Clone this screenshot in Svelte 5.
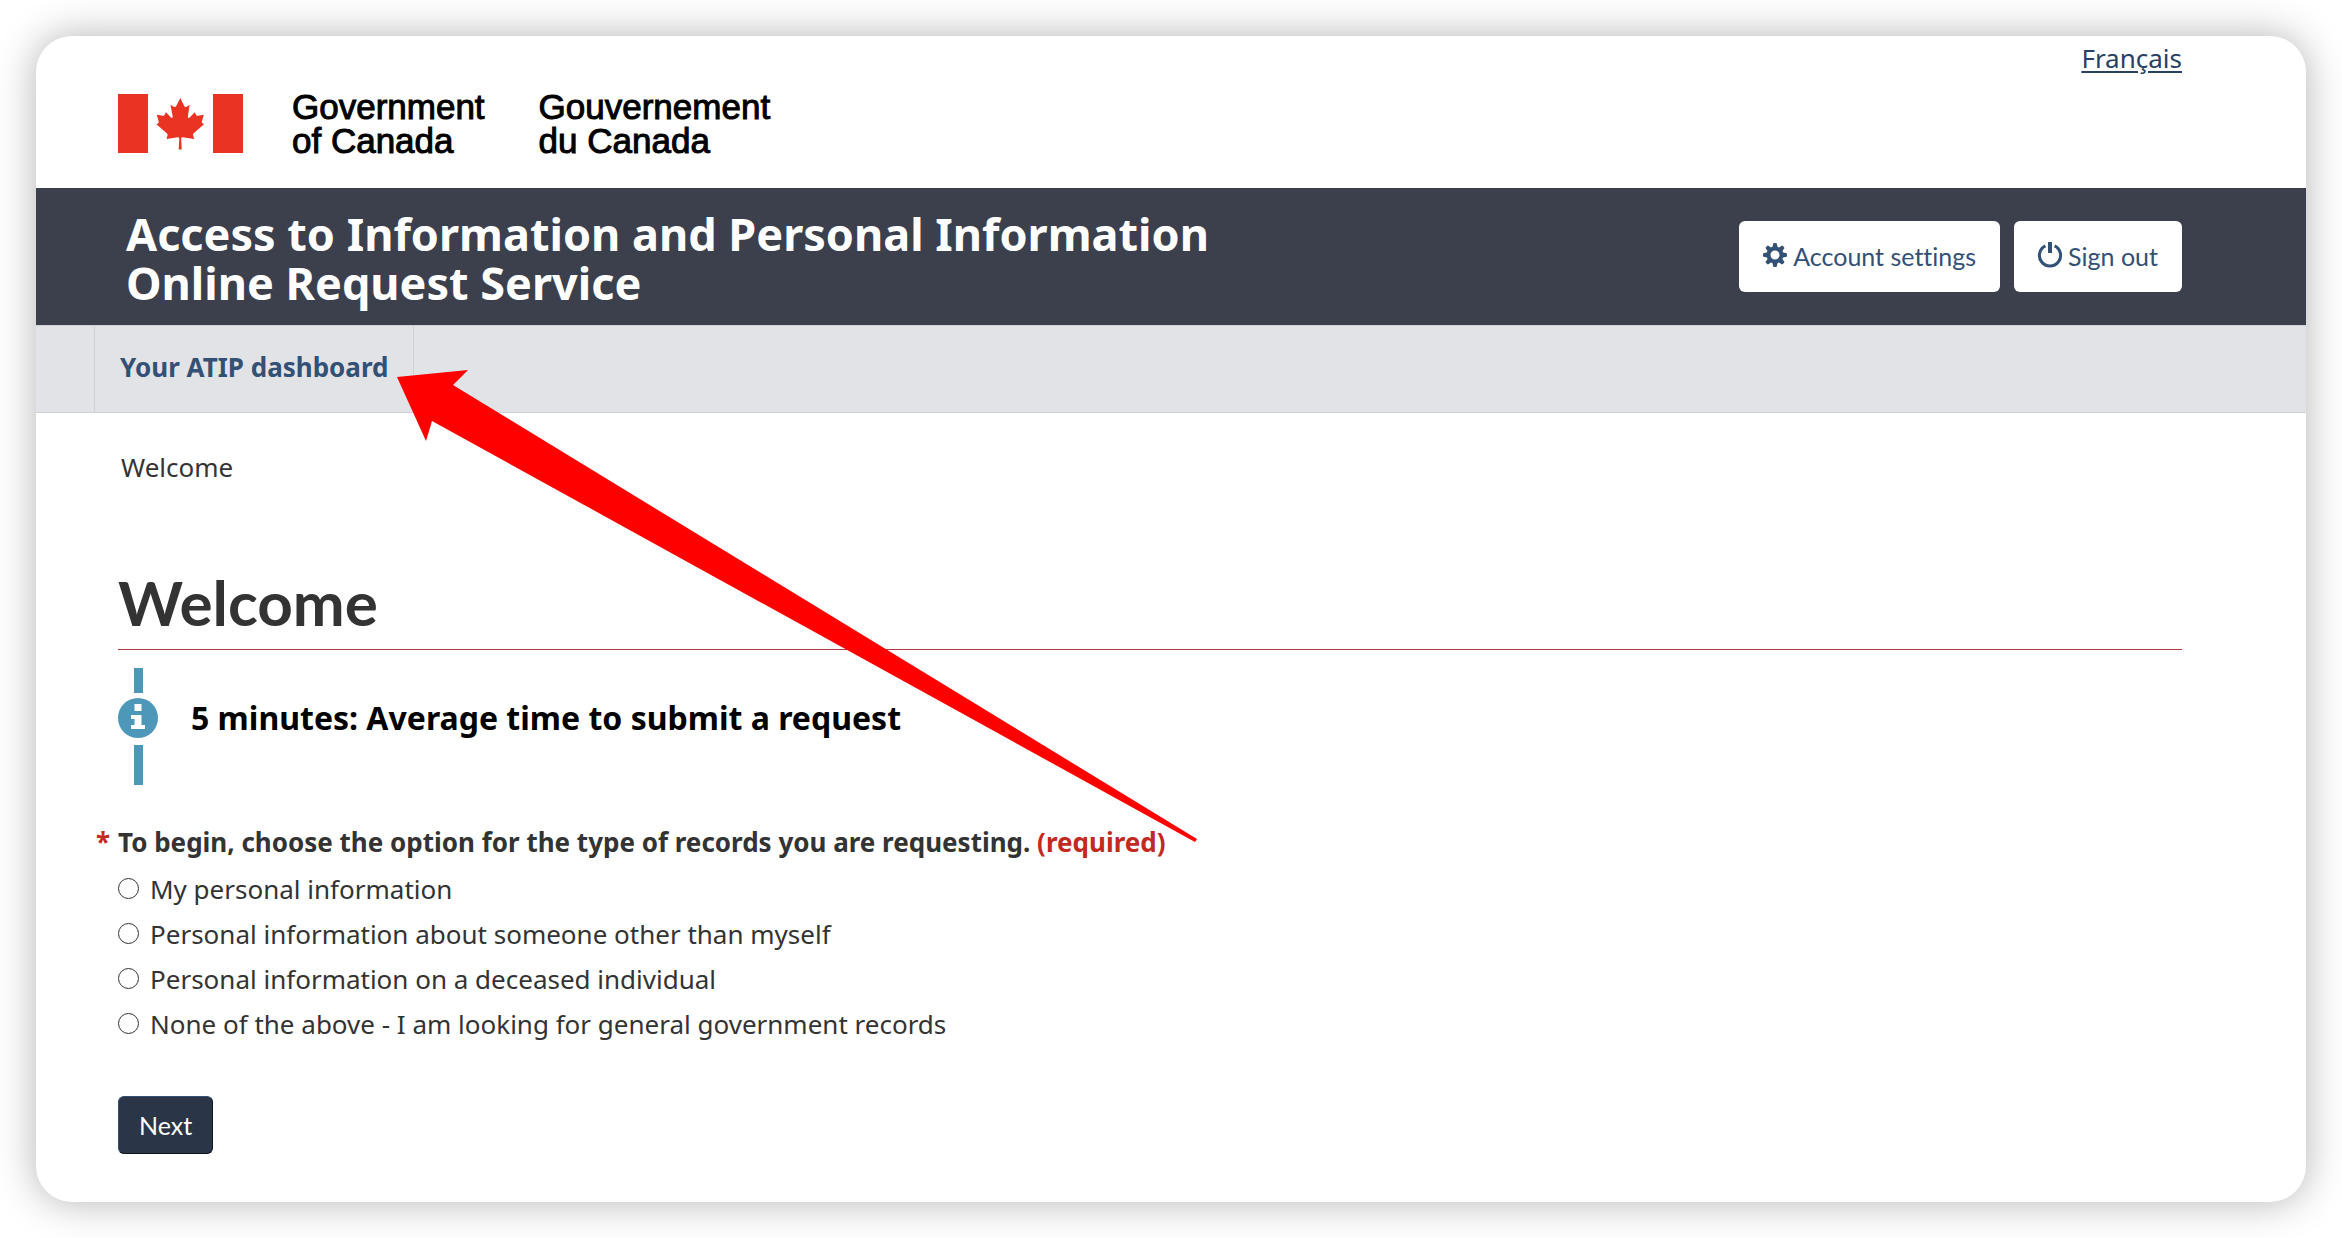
<script lang="ts">
  const options = [
    { id: 'self', text: 'My personal information' },
    { id: 'other', text: 'Personal information about someone other than myself' },
    { id: 'deceased', text: 'Personal information on a deceased individual' },
    { id: 'general', text: 'None of the above - I am looking for general government records' },
  ];
  let choice = $state('');
</script>

<div class="stage">
  <div class="window">
    <header>
      <div class="brand">
        <svg class="flag" viewBox="0 0 125 59" role="img" aria-label="Flag of Canada">
          <rect width="30" height="59" />
          <rect x="95" width="30" height="59" />
          <path
            d="M62.3 4L66.3 12.3Q67.2 13.5 68.4 12.9L71.6 10.8L69.9 22.7Q69.9 24.8 71.7 23.5L76.7 18.3L78.3 21.3Q78.8 22 79.8 21.8L85.8 20.8L83.8 27.8Q83.7 28.8 84.5 29.2L86 30.3L75.4 39.4Q74.7 40.2 75 41.1L76.2 44.9L64.6 43.2Q63.2 43.2 63.2 44.4L63.7 55.5H60.7L61.3 44.4Q61.2 43.2 59.9 43.2L48.6 44.9L49.6 41.1Q49.8 40.1 49 39.4L38.4 30.3L40.2 29.2Q40.9 28.7 40.7 27.7L38.8 20.8L44.8 21.8Q45.8 22 46.3 21.2L47.9 18.3L53 23.5Q54.6 24.8 54.7 22.7L52.5 10.8L56 12.9Q57.3 13.5 58.1 12.3Z"
          />
        </svg>
        <div class="wordmarks">
          <span>Government<br />of Canada</span>
          <span lang="fr">Gouvernement<br />du Canada</span>
        </div>
      </div>
      <a class="lang" href="#fr" lang="fr">Français</a>
    </header>

    <div class="banner">
      <div class="title">Access to Information and Personal Information<br />Online Request Service</div>
      <div class="actions">
        <button type="button">
          <svg viewBox="0 0 24 24" aria-hidden="true">
            <g>
              <path d="M12 3.6a8.4 8.4 0 1 0 0 16.8a8.4 8.4 0 0 0 0-16.8zM12 7.5a4.5 4.5 0 1 1 0 9a4.5 4.5 0 0 1 0-9z" fill-rule="evenodd" />
              {#each [0, 45, 90, 135, 180, 225, 270, 315] as angle}
                <path d="M9.3 4.8L10.3 0.3Q12 -0.3 13.7 0.3L14.7 4.8Z" transform="rotate({angle} 12 12)" />
              {/each}
            </g>
          </svg>
          <span>Account settings</span>
        </button>
        <button type="button">
          <svg viewBox="0 0 24 24" aria-hidden="true">
            <path class="ring" d="M7.4 2.9A10.6 10.6 0 1 0 16.6 2.9" />
            <rect x="10" y="-1" width="4" height="11" />
          </svg>
          <span>Sign out</span>
        </button>
      </div>
    </div>

    <nav>
      <a href="#dashboard">Your ATIP dashboard</a>
    </nav>

    <div class="crumb">Welcome</div>

    <main>
      <h1>Welcome</h1>

      <section class="info">
        <div class="rail">
          <i class="top"></i>
          <svg viewBox="0 0 40 40" aria-hidden="true">
            <circle cx="20" cy="20" r="20" />
            <path class="glyph" d="M16.5 6H23.5V13H16.5ZM13 17H23.5V27H27V31H13V27H16.5V21H13Z" />
          </svg>
          <i class="bottom"></i>
        </div>
        <p>5 minutes: Average time to submit a request</p>
      </section>

      <form onsubmit={(e) => e.preventDefault()}>
        <fieldset>
          <legend><span class="star">*</span>To begin, choose the option for the type of records you are requesting. <span class="req">(required)</span></legend>
          {#each options as option}
            <label for={option.id}>
              <input type="radio" id={option.id} name="records" value={option.id} bind:group={choice} />
              {option.text}
            </label>
          {/each}
        </fieldset>
        <button class="next" type="submit">Next</button>
      </form>
    </main>

    <svg class="arrow" viewBox="0 0 800 472" aria-hidden="true">
      <path d="M0 7L71 0L56 15L800 469L798 472L35 51L29 71Z" />
    </svg>
  </div>
</div>

<style>
  :global(body) {
    background: #fff;
  }
  .stage {
    box-sizing: border-box;
    min-height: 100vh;
    padding: 36px;
    display: flex;
    font: 26px/36px 'Noto Sans', sans-serif;
    color: #333;
  }
  .window {
    position: relative;
    flex: 1;
    background: #fff;
    border-radius: 36px;
    box-shadow: 0 0 40px rgba(0, 0, 0, 0.3);
  }
  header {
    display: flex;
    justify-content: space-between;
    align-items: flex-start;
    height: 152px;
    padding: 0 124px 0 82px;
  }
  .brand {
    display: flex;
    align-items: flex-start;
    gap: 49px;
    padding-top: 54px;
  }
  .flag {
    width: 125px;
    margin-top: 4px;
    fill: #eb3323;
  }
  .wordmarks {
    display: flex;
    gap: 54px;
    font: 35px/34px 'Liberation Sans', Arial, sans-serif;
    color: #000;
    -webkit-text-stroke: 1px #000;
  }
  .lang {
    padding-top: 4px;
    color: #284162;
    text-underline-offset: 3px;
  }
  .banner {
    display: flex;
    justify-content: space-between;
    align-items: center;
    height: 137px;
    padding: 0 124px 0 90px;
    background: #3b404c;
    color: #fff;
  }
  .title {
    padding-top: 2px;
    font-size: 45px;
    font-weight: 700;
    line-height: 49px;
  }
  .actions {
    display: flex;
    gap: 14px;
  }
  .actions button {
    display: flex;
    align-items: center;
    gap: 6px;
    padding: 17px 24px;
    border: 0;
    border-radius: 6px;
    background: #fff;
    color: #335075;
    font: 25px/37px Lato, sans-serif;
    font-variant-ligatures: none;
  }
  .actions svg {
    width: 24px;
    height: 24px;
    margin-bottom: 4px;
    overflow: visible;
    fill: #335075;
  }
  .actions .ring {
    fill: none;
    stroke: #335075;
    stroke-width: 3;
  }
  nav {
    display: flex;
    padding-left: 58px;
    background: #e1e3e7;
    border-top: 1px solid #cfd1d5;
    border-bottom: 1px solid #cfd1d5;
  }
  nav a {
    padding: 23px 25px 27px;
    border-left: 1px solid #cfd1d5;
    border-right: 1px solid #cfd1d5;
    color: #335075;
    font-weight: 700;
    text-decoration: none;
  }
  .crumb {
    padding: 36px 85px 0;
  }
  main {
    padding: 0 124px 48px 82px;
  }
  h1 {
    margin: 79px 0 0;
    padding-bottom: 9px;
    border-bottom: 1px solid #af3c43;
    font: 700 62px/76px Lato, sans-serif;
  }
  .info {
    display: flex;
    gap: 33px;
    margin-top: 18px;
  }
  .rail {
    display: flex;
    flex-direction: column;
    align-items: center;
    width: 40px;
  }
  .rail svg {
    width: 40px;
    height: 40px;
    margin: 5px 0 7px;
    fill: #4d97b9;
  }
  .rail .glyph {
    fill: #fff;
  }
  .rail i {
    width: 9px;
    background: #4d97b9;
  }
  .rail .top {
    height: 25px;
  }
  .rail .bottom {
    height: 40px;
  }
  .info p {
    margin: 28px 0 0;
    color: #000;
    font-size: 32px;
    font-weight: 700;
    line-height: 44px;
  }
  fieldset {
    margin: 39px 0 0;
    padding: 0;
    border: 0;
  }
  legend {
    margin-left: -22px;
    padding: 0 0 7px;
    font-weight: 700;
  }
  .star {
    display: inline-block;
    width: 22px;
  }
  .star,
  .req {
    color: #c22a1f;
  }
  label {
    display: flex;
    align-items: center;
    gap: 11px;
    line-height: 45px;
  }
  input {
    appearance: none;
    width: 21px;
    height: 21px;
    margin: 0 0 3px;
    border: 1px solid #333;
    border-radius: 50%;
    background: #fff;
  }
  input:checked {
    border: 6px solid #335075;
  }
  .next {
    margin-top: 49px;
    padding: 9px 20px;
    border: 1px outset #335075;
    border-radius: 6px;
    background: #2a3647;
    color: #fff;
    font: 25px/38px Lato, sans-serif;
  }
  .arrow {
    position: absolute;
    top: 334px;
    left: 361px;
    width: 800px;
    fill: #f00;
    pointer-events: none;
  }
</style>
